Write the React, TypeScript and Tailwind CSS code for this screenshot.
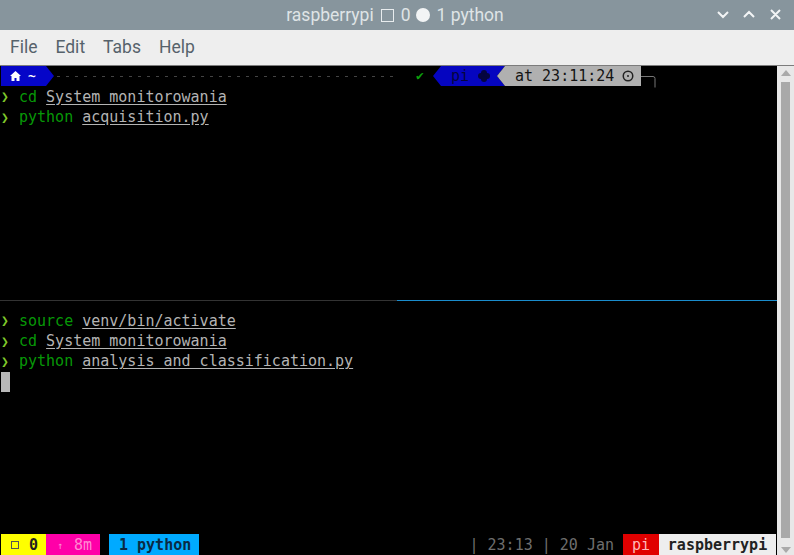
const mono = "font-['DejaVu_Sans_Mono',monospace]";

function Prompt({ cmd, arg }: { cmd: string; arg: string }) {
  return (
    <div className="flex h-[20.25px] items-center whitespace-pre pl-[1px]">
      <span className="w-[18px] text-[13px] font-bold text-[#7fc92a]">❯</span>
      <span className="text-[#079807]">{cmd} </span>
      <span className="text-[#b4b4b4] underline underline-offset-2">{arg}</span>
    </div>
  );
}

export default function App() {
  return (
    <div className="flex h-[555px] w-[794px] flex-col overflow-hidden bg-black">
      <header className="flex h-[30px] items-center justify-center bg-[#87959d] font-['Roboto',sans-serif] text-[17.5px] text-[#dfe4e6]">
        <span className="-ml-[4px] flex items-center whitespace-pre">
          raspberrypi
          <span className="mx-[7px] h-[13px] w-[13px] border-[1.5px] border-[#e8ecee]" />0
          <span className="ml-[5px] mr-[7px] h-[14px] w-[14px] rounded-full bg-[#f2f4f5]" />1 python
        </span>
        <svg className="absolute left-[716px] top-[9px]" width="68" height="12" viewBox="0 0 68 12" fill="none" stroke="#f2f4f5" strokeWidth="2">
          <path d="M2 3l5 5 5-5M28 8l5-5 5 5M55 1l9 9M64 1l-9 9" />
        </svg>
      </header>
      <nav className="flex h-[36px] items-center gap-[18px] border-b border-[#7c7c7c] bg-[#eeeeee] pl-[10px] font-['Roboto',sans-serif] text-[17.5px] text-[#56626b]">
        <span>File</span><span>Edit</span><span>Tabs</span><span>Help</span>
      </nav>
      <div className="flex min-h-0 flex-1">
        <main className={`relative flex min-w-0 flex-1 flex-col text-[15px] ${mono}`}>
          <section className="flex h-[235px] flex-col border-b border-[#333333]">
            <div className="flex h-[21px] items-start pl-[1px]">
              <div className="flex h-[20px] w-[53px] items-center gap-[7px] bg-[#0505c8] pl-[9px] text-[13px] font-bold text-white [clip-path:polygon(0_0,45px_0,53px_50%,45px_100%,0_100%)]">
                <svg width="11" height="10" viewBox="0 0 11 10" fill="white"><path d="M5.5 0L11 5H9.5V10H6.5V7H4.5V10H1.5V5H0z" /></svg>
                <span>~</span>
              </div>
              <div className="ml-[3px] mt-[10px] h-px w-[340px] bg-[repeating-linear-gradient(90deg,#444_0,#444_3px,transparent_3px,transparent_9px)]" />
              <span className="ml-[19px] w-[17px] text-[13px] leading-[20px] text-[#0ca00c]">✔</span>
              <div className="flex h-[20px] w-[72px] items-center bg-[#0505c0] pl-[18px] text-[#05053f] [clip-path:polygon(0_50%,8px_0,72px_0,64px_50%,72px_100%,8px_100%)]">
                pi
                <svg className="ml-[9px]" width="12" height="12" viewBox="0 0 12 12" fill="#05053f">
                  <circle cx="6" cy="3" r="3" /><circle cx="3" cy="6" r="3" /><circle cx="9" cy="6" r="3" /><circle cx="6" cy="9" r="3" />
                </svg>
              </div>
              <div className="-ml-[8px] flex h-[20px] w-[144px] items-center gap-[8px] bg-[#b0b0b0] pl-[18px] text-[#141414] [clip-path:polygon(0_50%,8px_0,100%_0,100%_100%,8px_100%)]">
                <span>at 23:11:24</span>
                <svg width="12" height="12" viewBox="0 0 12 12" fill="none" stroke="#222" strokeWidth="1.5">
                  <circle cx="6" cy="6" r="4.75" /><circle cx="6" cy="6" r="1" fill="#222" stroke="none" />
                </svg>
              </div>
              <svg className="mt-[10px]" width="16" height="12" viewBox="0 0 16 12" fill="none" stroke="#777"><path d="M0 .5H12q2 0 2 2v9" /></svg>
            </div>
            <Prompt cmd="cd" arg="System monitorowania" />
            <Prompt cmd="python" arg="acquisition.py" />
          </section>
          <div className="absolute left-[397px] right-0 top-[234px] h-px bg-[#1a8ccc]" />
          <section className="flex min-h-0 flex-1 flex-col pt-[10px]">
            <Prompt cmd="source" arg="venv/bin/activate" />
            <Prompt cmd="cd" arg="System monitorowania" />
            <Prompt cmd="python" arg="analysis and classification.py" />
            <div className="ml-[1px] h-[20px] w-[9px] bg-[#b8b8b8]" />
          </section>
          <footer className="flex h-[21px] items-center whitespace-pre pl-[1px] pr-[1px] pt-[0px]">
            <div className="flex h-full w-[45px] items-center gap-[10px] bg-[#ffff00] pl-[10px] pt-[1px] font-bold text-[#222]">
              <span className="h-[8px] w-[8px] border border-[#555]" />0
            </div>
            <div className="flex h-full w-[54px] items-center gap-[11px] bg-[#ff00a8] pl-[11px] pt-[1px] text-[#ff8ad2]">
              <span className="text-[10px]">↑</span>8m
            </div>
            <div className="ml-[9px] flex h-full w-[90px] items-center bg-[#00aaff] pl-[10px] pt-[1px] font-bold text-[#0a2a44]">1 python</div>
            <div className="ml-auto flex h-full items-center">
              <span className="mr-[9px] pt-[1px] text-[#6e6e6e]">| 23:13 | 20 Jan</span>
              <span className="flex h-full w-[36px] items-center justify-center bg-[#e00000] pt-[1px] text-[#ffb8b8]">pi</span>
              <span className="flex h-full w-[117px] items-center justify-center bg-[#eeeeee] pt-[1px] font-bold text-[#222]">raspberrypi</span>
            </div>
          </footer>
        </main>
        <aside className="flex w-[17px] flex-col items-center bg-[#e8e8e8] pt-[4px]">
          <svg width="10" height="6" viewBox="0 0 10 6" fill="#aaa"><path d="M5 0l5 6H0z" /></svg>
          <div className="mt-[6px] w-[9px] flex-1 bg-[#a9a9a9]" />
          <svg className="mb-[2px] mt-[9px]" width="10" height="6" viewBox="0 0 10 6" fill="#aaa"><path d="M5 6L0 0h10z" /></svg>
        </aside>
      </div>
    </div>
  );
}
